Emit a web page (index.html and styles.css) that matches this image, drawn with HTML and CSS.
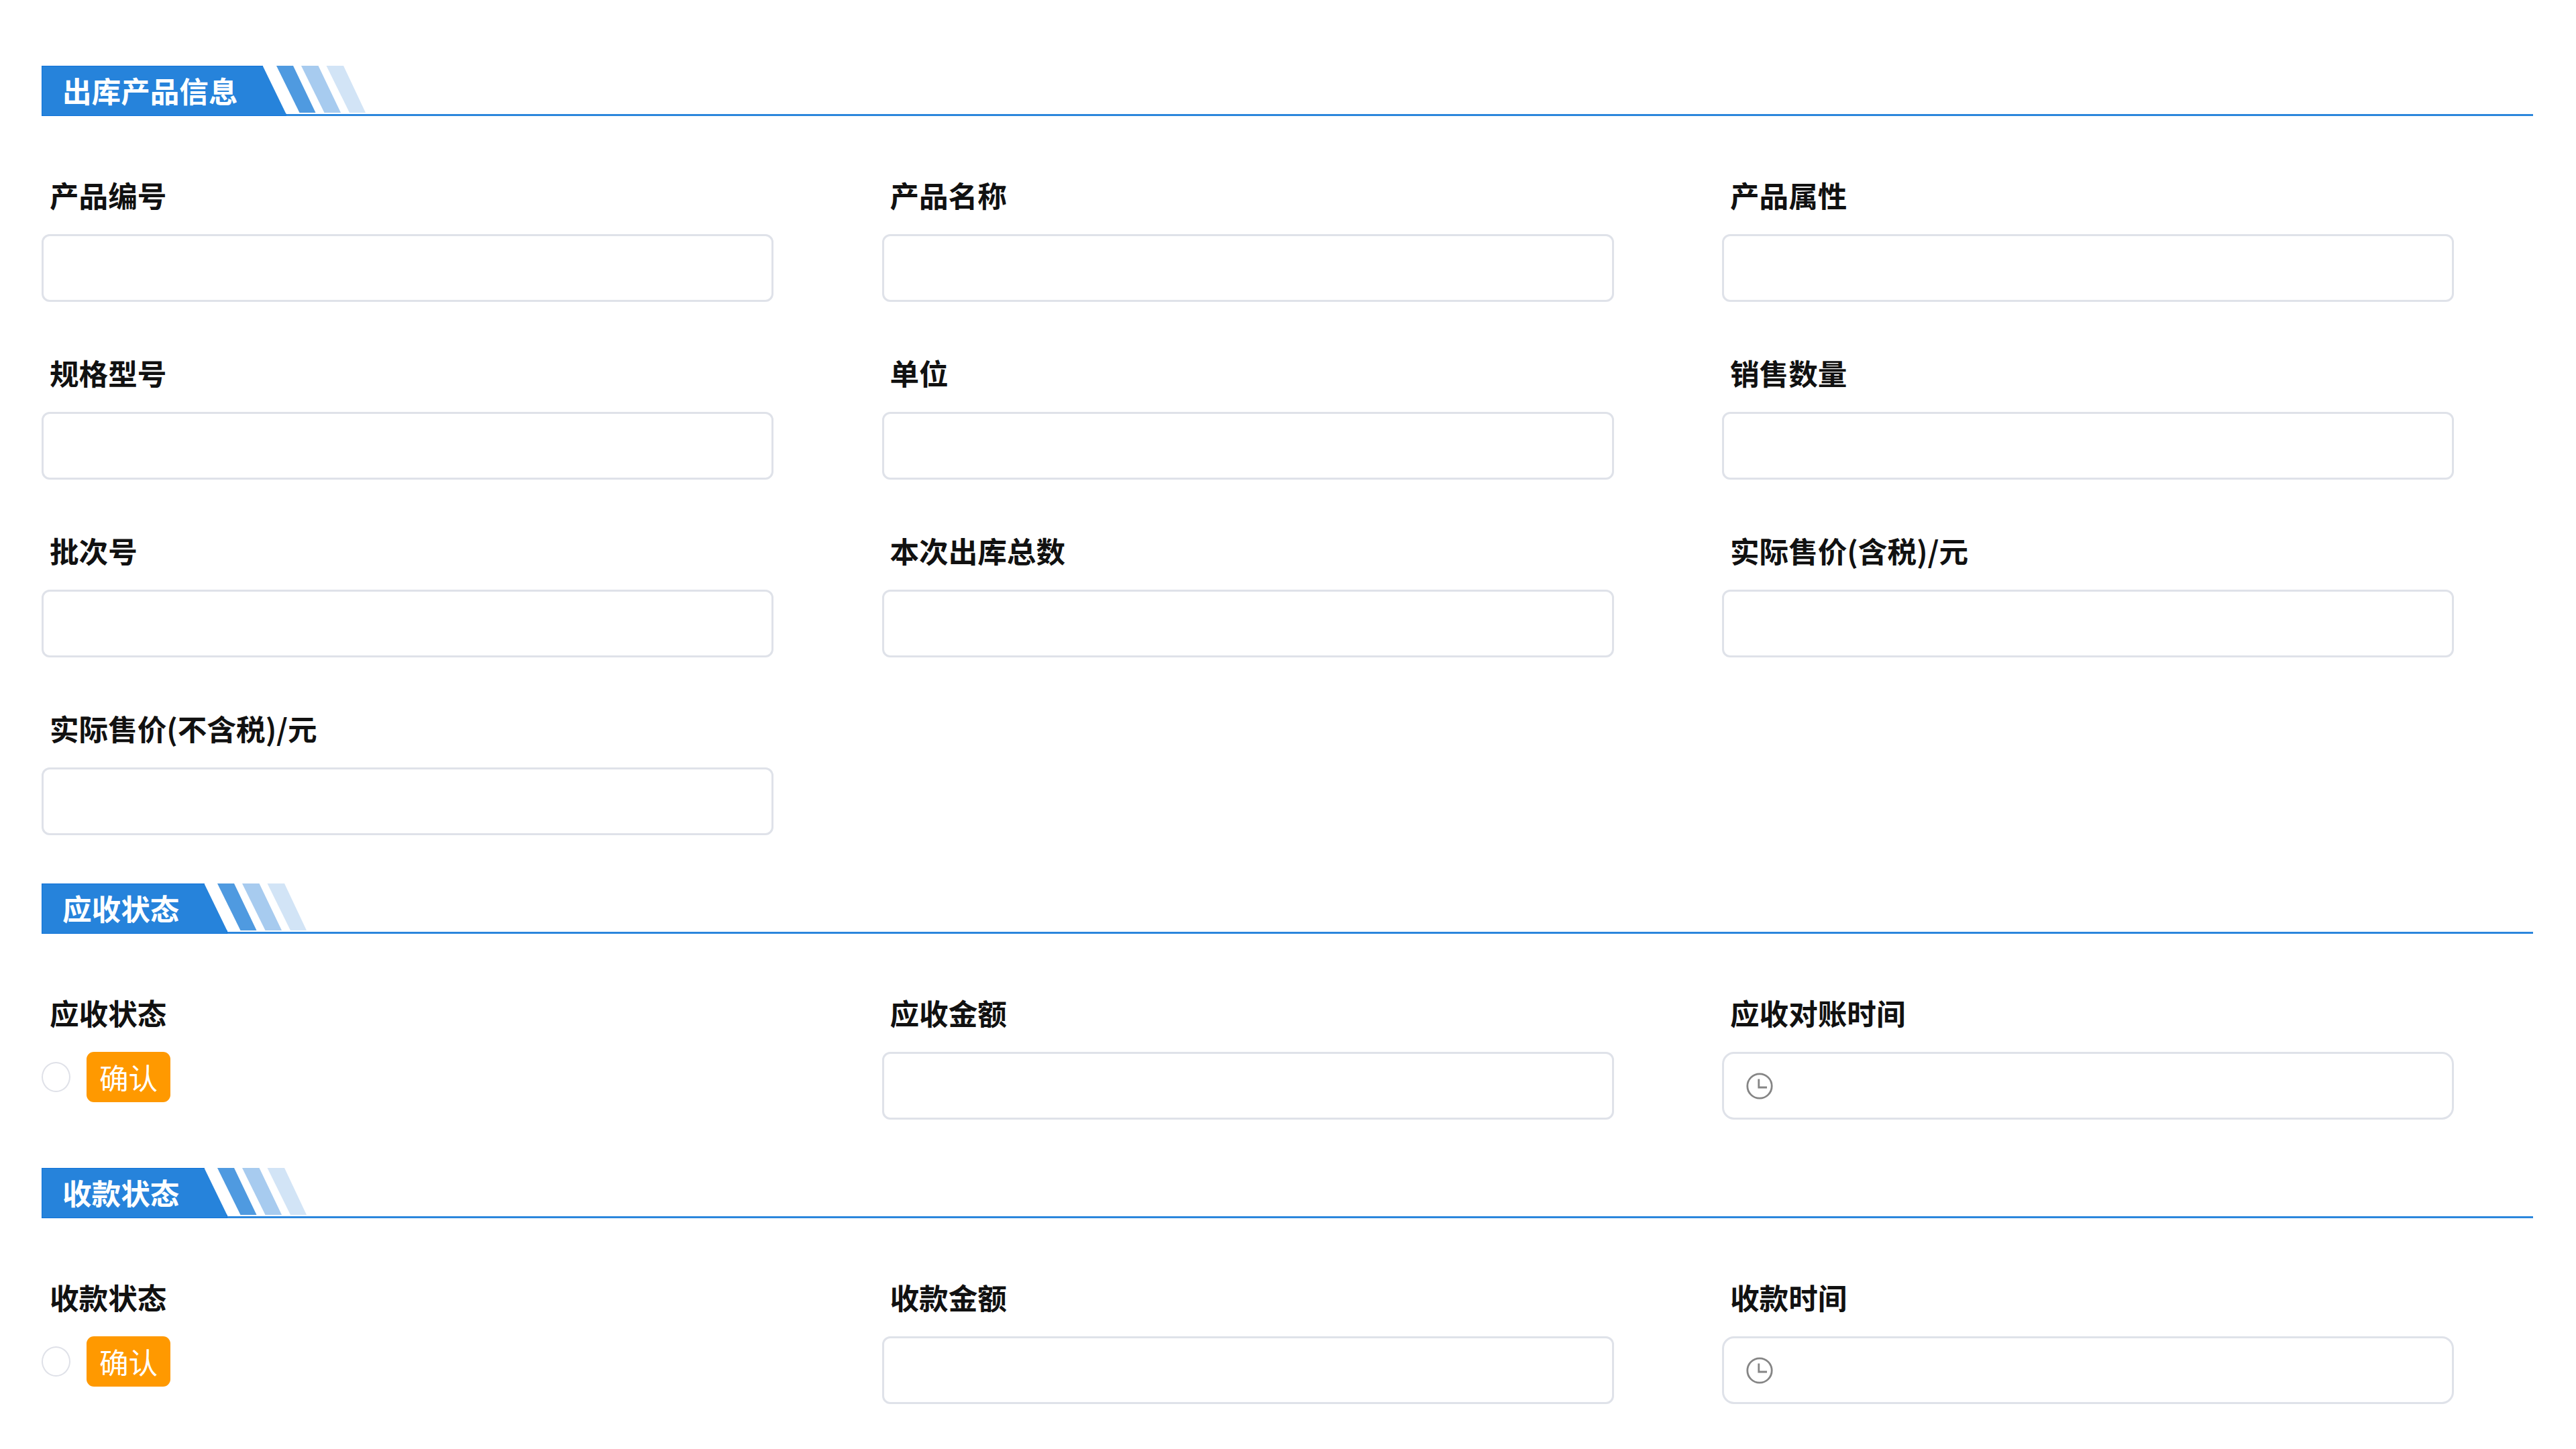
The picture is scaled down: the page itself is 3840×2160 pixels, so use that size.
FILE: index.html
```html
<!DOCTYPE html>
<html lang="zh-CN">
  <head>
    <meta charset="UTF-8" />
    <meta name="viewport" content="width=device-width, initial-scale=1.0" />
    <title>出库产品信息</title>
    <link rel="stylesheet" href="styles.css">
  </head>
  <body>
    <form class="page">
      <section class="section section-product">
        <div class="section-header">
          <h3 class="section-title">出库产品信息</h3>
          <svg class="stripes" width="134" height="70" viewBox="0 0 134 70">
            <polygon points="0,0 25,0 58.5,70 34.5,70" fill="#4f9ae0" />
            <polygon points="37,0 62.5,0 96,70 71.5,70" fill="#a7cbef" />
            <polygon points="74.5,0 100,0 133,70 109,70" fill="#d2e4f6" />
          </svg>
        </div>
        <div class="fields">
          <div class="field">
            <label for="code">产品编号</label>
            <input type="text" id="code" />
          </div>
          <div class="field">
            <label for="name">产品名称</label>
            <input type="text" id="name" />
          </div>
          <div class="field">
            <label for="attr">产品属性</label>
            <input type="text" id="attr" />
          </div>
          <div class="field">
            <label for="model">规格型号</label>
            <input type="text" id="model" />
          </div>
          <div class="field">
            <label for="unit">单位</label>
            <input type="text" id="unit" />
          </div>
          <div class="field">
            <label for="saleCount">销售数量</label>
            <input type="text" id="saleCount" />
          </div>
          <div class="field">
            <label for="batch">批次号</label>
            <input type="text" id="batch" />
          </div>
          <div class="field">
            <label for="total">本次出库总数</label>
            <input type="text" id="total" />
          </div>
          <div class="field">
            <label for="priceTax">实际售价(含税)/元</label>
            <input type="text" id="priceTax" />
          </div>
          <div class="field">
            <label for="price">实际售价(不含税)/元</label>
            <input type="text" id="price" />
          </div>
        </div>
      </section>

      <section class="section">
        <div class="section-header">
          <h3 class="section-title">应收状态</h3>
          <svg class="stripes" width="134" height="70" viewBox="0 0 134 70">
            <polygon points="0,0 25,0 58.5,70 34.5,70" fill="#4f9ae0" />
            <polygon points="37,0 62.5,0 96,70 71.5,70" fill="#a7cbef" />
            <polygon points="74.5,0 100,0 133,70 109,70" fill="#d2e4f6" />
          </svg>
        </div>
        <div class="fields">
          <div class="field">
            <label for="receivableState">应收状态</label>
            <div class="choice">
              <input type="radio" class="radio" id="receivableState" />
              <span class="tag">确认</span>
            </div>
          </div>
          <div class="field">
            <label for="receivable">应收金额</label>
            <input type="text" id="receivable" />
          </div>
          <div class="field">
            <label>应收对账时间</label>
            <div class="date">
              <svg class="clock" width="40" height="40" viewBox="0 0 40 40">
                <circle cx="20" cy="20" r="18.2" />
                <path d="M18.8 9.5V22H31" />
              </svg>
            </div>
          </div>
        </div>
      </section>

      <section class="section">
        <div class="section-header">
          <h3 class="section-title">收款状态</h3>
          <svg class="stripes" width="134" height="70" viewBox="0 0 134 70">
            <polygon points="0,0 25,0 58.5,70 34.5,70" fill="#4f9ae0" />
            <polygon points="37,0 62.5,0 96,70 71.5,70" fill="#a7cbef" />
            <polygon points="74.5,0 100,0 133,70 109,70" fill="#d2e4f6" />
          </svg>
        </div>
        <div class="fields">
          <div class="field">
            <label for="paidState">收款状态</label>
            <div class="choice">
              <input type="radio" class="radio" id="paidState" />
              <span class="tag">确认</span>
            </div>
          </div>
          <div class="field">
            <label for="paid">收款金额</label>
            <input type="text" id="paid" />
          </div>
          <div class="field">
            <label>收款时间</label>
            <div class="date">
              <svg class="clock" width="40" height="40" viewBox="0 0 40 40">
                <circle cx="20" cy="20" r="18.2" />
                <path d="M18.8 9.5V22H31" />
              </svg>
            </div>
          </div>
        </div>
      </section>
    </form>
  </body>
</html>
```
FILE: styles.css
```css
* {
  box-sizing: border-box;
}

body {
  margin: 0;
  background-color: #fff;
  font-family: "Noto Sans CJK SC", sans-serif;
  font-size: 43.6px;
  color: #111;
}

.page {
  padding: 98px 64px 0 62px;
}

.section {
  height: 424px;
}

.section-product {
  height: 1219px;
}

.section-header {
  display: flex;
  align-items: flex-start;
  height: 75px;
  border-bottom: 3px solid #2b86dc;
}

.section-title {
  height: 75px;
  margin: 0;
  padding: 0 71px 0 30px;
  border: 1px solid #0f72d8;
  background-color: #2683db;
  color: #fff;
  font-size: 43.6px;
  font-weight: 700;
  line-height: 70px;
  clip-path: polygon(0 0, calc(100% - 35px) 0, 100% 96%, 100% 100%, 0 100%);
}

.stripes {
  margin-left: -15px;
}

.fields {
  display: grid;
  grid-template-columns: repeat(3, 1091px);
  grid-auto-rows: 265px;
  column-gap: 161.5px;
  padding-top: 90px;
}

.field {
  display: flex;
  flex-direction: column;
}

label {
  height: 86px;
  padding-left: 12px;
  font-weight: 700;
  line-height: 55px;
}

input[type="text"],
.date {
  width: 100%;
  height: 101px;
  margin: 0;
  border: 3px solid #dfe2e9;
  border-radius: 12px;
  background-color: #fff;
}

.date {
  display: flex;
  align-items: center;
  padding-left: 33px;
  border-radius: 18px;
}

.clock {
  fill: none;
  stroke: #858585;
  stroke-width: 2.8;
}

.choice {
  display: flex;
  align-items: center;
  gap: 24px;
}

.radio {
  appearance: none;
  width: 43px;
  height: 45px;
  margin: 0;
  border: 2px solid #dfe1e8;
  border-radius: 50%;
}

.tag {
  width: 125px;
  height: 75px;
  border-radius: 11px;
  background-color: #ff9900;
  color: #fff;
  line-height: 75px;
  text-align: center;
}
```
